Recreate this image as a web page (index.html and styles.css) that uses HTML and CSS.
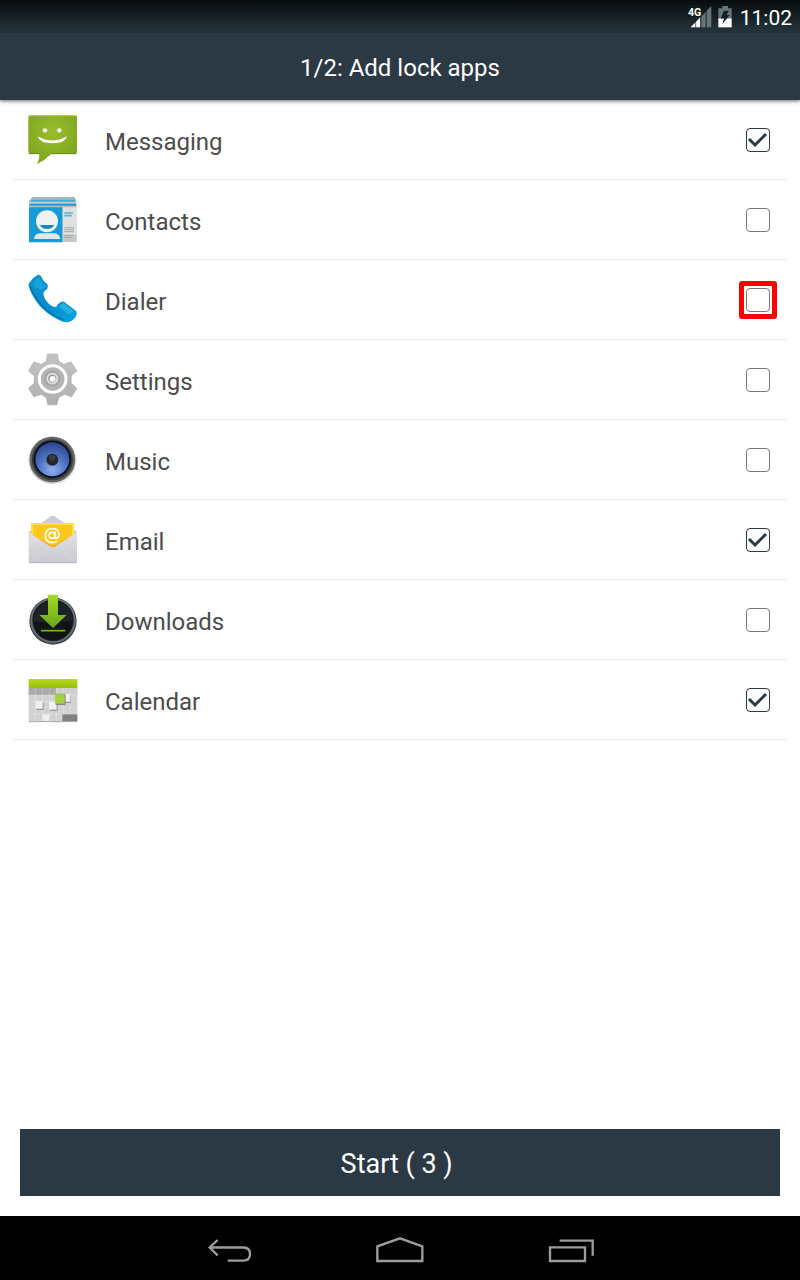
FILE: index.html
```html
<!DOCTYPE html>
<html lang="en">
<head>
<meta charset="utf-8">
<meta name="viewport" content="width=device-width, initial-scale=1">
<title>Add lock apps</title>
<link rel="stylesheet" href="styles.css">
</head>
<body>
<div class="screen">
  <div class="status-bar">
    <svg class="signal" viewBox="51 12 72 72" aria-label="4G signal" role="img">
      <path d="M121 15V79H60Z" fill="#66757a"/>
      <path d="M88 49V79H59Z" fill="#fff"/>
      <path d="M89.500 15V80M105.500 15V80" stroke="#15252b" stroke-width="3"/>
      <path d="M74 60V80" stroke="#15252b" stroke-width="2"/>
      <path d="M51 12H91V47H51Z" fill="#0e1a1e"/>
      <text class="network" x="51" y="45">4G</text>
    </svg>
    <svg class="battery" viewBox="141 12 42 72" aria-label="Battery charging" role="img">
      <path d="M154 15H171V22H182V52H142V22H154Z" fill="#66757a"/>
      <path d="M142 52H182V79H142Z" fill="#fff"/>
      <path d="M158 30L174 29L166 42L176 42L154 70L159 52L149 53Z" fill="#122127"/>
    </svg>
    <time class="clock">11:02</time>
  </div>
  <header class="title-bar"><h1 class="title">1/2: Add lock apps</h1></header>

  <main class="content">
    <ul class="apps">
      <li><label class="app">
        <svg class="app-icon" viewBox="45 39 162 162" aria-hidden="true">
          <defs><radialGradient id="msg" cx=".5" cy=".35" r=".75"><stop offset="0" stop-color="#9abd2e"/><stop offset="1" stop-color="#78a31c"/></radialGradient></defs>
          <path d="M62 46H194Q201 46 201 53V155Q201 162 194 162H124Q105 181 80 193Q90 178 87 162H62Q55 162 55 155V53Q55 46 62 46Z" fill="url(#msg)"/>
          <path d="M58 47H198" stroke="#b3cf3f" stroke-width="4" stroke-linecap="round"/>
          <path d="M57 161H87M124 161H199" stroke="#668b18" stroke-width="3"/>
          <circle cx="105" cy="91" r="6.500" fill="#fff"/><circle cx="148" cy="91" r="6.500" fill="#fff"/>
          <path d="M83 109Q127 134 171 109Q166 130 127 130Q89 130 83 109Z" fill="#fff"/>
        </svg>
        <span class="app-name">Messaging</span>
        <span class="tick"><input class="box" type="checkbox" checked><svg class="mark" viewBox="0 0 24 24" aria-hidden="true"><path d="M3 11L9 17L20 6"/></svg></span>
      </label></li>
      <li><label class="app">
        <svg class="app-icon" viewBox="30 27 162 162" aria-hidden="true">
          <path d="M52 39H178L184 49V174H43V49Z" fill="#bfc3c5"/>
          <path d="M52 39H178L181 47H48Z" fill="#a9b4b9"/>
          <path d="M48 47H181V55H46Z" fill="#36afe0"/>
          <path d="M45 53H183V59H44Z" fill="#c9c9c9"/>
          <path d="M43 59H184V65H43Z" fill="#1599d2"/>
          <path d="M43 65H184V70H43Z" fill="#b7babb"/>
          <path d="M143 70H185V174H143Z" fill="#dfe0e0"/>
          <path d="M143 154H185V174H143Z" fill="#c6c8c9"/>
          <path d="M42 70H142V175H42Z" fill="#169bd5"/>
          <path d="M57 165Q58 150 76 148H118Q134 150 136 165Z" fill="#e5e7e7"/>
          <circle cx="96" cy="112" r="33" fill="#f0f2f2"/>
          <path d="M75 123H118Q111 135 96 135T75 123Z" fill="#1388ba"/>
          <path d="M148 87H174M148 95H170" stroke="#57b3d8" stroke-width="5"/>
          <path d="M148 131H177M148 137H177M148 143H177M148 154H177M148 160H170" stroke="#999c9e" stroke-width="2.500"/>
        </svg>
        <span class="app-name">Contacts</span>
        <span class="tick"><input class="box" type="checkbox"><svg class="mark" viewBox="0 0 24 24" aria-hidden="true"><path d="M3 11L9 17L20 6"/></svg></span>
      </label></li>
      <li><label class="app">
        <svg class="app-icon" viewBox="30 27 162 162" aria-hidden="true">
          <defs><linearGradient id="tel" x1="0" y1="0" x2="1" y2="1"><stop offset="0" stop-color="#0795d2"/><stop offset=".5" stop-color="#0a8ccd"/><stop offset="1" stop-color="#07a4dd"/></linearGradient></defs>
          <path d="M41 60Q53 39 70 32Q76 31 79 38Q84 52 97 61Q100 66 97 74L86 84Q83 100 99 117Q113 131 124 129Q127 119 140 113Q146 112 151 116L181 139Q187 144 185 151Q181 168 161 174Q148 177 130 167Q96 151 72 123Q48 93 41 66Z" fill="url(#tel)"/>
          <path d="M52 62Q61 46 73 39L80 55L93 66L83 77Q69 75 52 62Z" fill="#17a2da"/>
          <path d="M132 130Q137 119 146 117L177 141L163 151Z" fill="#26b1de"/>
          <path d="M46 68Q55 92 79 123Q106 151 145 167" fill="none" stroke="#0672ae" stroke-width="4" stroke-linecap="round"/>
        </svg>
        <span class="app-name">Dialer</span>
        <span class="tick highlighted"><input class="box" type="checkbox"><svg class="mark" viewBox="0 0 24 24" aria-hidden="true"><path d="M3 11L9 17L20 6"/></svg></span>
      </label></li>
      <li><label class="app">
        <svg class="app-icon" viewBox="30 27 162 162" aria-hidden="true">
          <defs><linearGradient id="gear" x2="0" y2="1"><stop stop-color="#c3c3c3"/><stop offset="1" stop-color="#b0b0b0"/></linearGradient></defs>
          <path d="M97 32H127L131 54L146 63L168 55L186 82L169 96V119L186 134L170 160L149 152L131 162L126 184H98L94 162L78 152L56 160L40 134L57 119V96L40 82L56 55L78 63L94 54Z" fill="#888" opacity=".6"/>
          <path d="M97 30H127L131 52L146 61L168 53L185 80L168 94V117L185 132L169 157L149 149L131 159L126 181H98L94 159L78 149L57 157L41 132L58 117V94L41 80L57 53L78 61L94 52Z" fill="url(#gear)" stroke="#b5b5b5" stroke-width="2" stroke-linejoin="round"/>
          <circle cx="113" cy="105" r="40" fill="#b4b4b4" stroke="#fff" stroke-width="9"/>
          <circle cx="112" cy="104" r="24" fill="#a6a6a6"/>
          <circle cx="112" cy="104" r="15" fill="#999" stroke="#e5e5e5" stroke-width="5"/>
          <circle cx="113" cy="105" r="9" fill="#fff"/>
        </svg>
        <span class="app-name">Settings</span>
        <span class="tick"><input class="box" type="checkbox"><svg class="mark" viewBox="0 0 24 24" aria-hidden="true"><path d="M3 11L9 17L20 6"/></svg></span>
      </label></li>
      <li><label class="app">
        <svg class="app-icon" viewBox="30 27 162 162" aria-hidden="true">
          <defs><radialGradient id="cone" cx=".5" cy=".8" r=".8"><stop stop-color="#91b1ed"/><stop offset=".5" stop-color="#4f74c3"/><stop offset="1" stop-color="#2b458e"/></radialGradient></defs>
          <circle cx="112" cy="109" r="72" fill="#777" opacity=".25"/>
          <circle cx="112" cy="107" r="65" fill="#393b3c" stroke="#626465" stroke-width="7"/>
          <circle cx="112" cy="106" r="56" fill="#070b1b"/>
          <circle cx="112" cy="106" r="51" fill="url(#cone)"/>
          <circle cx="112" cy="107" r="18" fill="#26282b"/>
          <circle cx="112" cy="101" r="9" fill="#3b3d40"/>
        </svg>
        <span class="app-name">Music</span>
        <span class="tick"><input class="box" type="checkbox"><svg class="mark" viewBox="0 0 24 24" aria-hidden="true"><path d="M3 11L9 17L20 6"/></svg></span>
      </label></li>
      <li><label class="app">
        <svg class="app-icon" viewBox="30 27 162 162" aria-hidden="true">
          <defs><linearGradient id="env" x2="0" y2="1"><stop stop-color="#e3e1e7"/><stop offset="1" stop-color="#c9c8d0"/></linearGradient></defs>
          <path d="M41 84L108 36Q113 33 118 36L186 84V100H41Z" fill="#cfcdd2"/>
          <path d="M49 57H177V104L113 145L49 104Z" fill="#ffc61b"/>
          <path d="M52 60H174V104L113 140L52 104Z" fill="none" stroke="#ffe13b" stroke-width="6"/>
          <path d="M60 98L113 125L166 98L113 144Z" fill="#f9b01c"/>
          <path d="M41 85L107 128Q113 132 119 128L186 85V174Q186 177 182 177H45Q41 177 41 174Z" fill="url(#env)"/>
          <path d="M42 176L82 145M185 176L145 145" stroke="#d9d7df" stroke-width="2"/>
          <path d="M42 176H185" stroke="#b6b5bb" stroke-width="3"/>
          <circle cx="111" cy="94" r="9" fill="none" stroke="#fff" stroke-width="5"/>
          <path d="M121 84L119 97Q119 105 125 103Q133 99 132 89Q130 74 112 74Q93 74 91 94Q90 115 111 116Q119 116 125 112" fill="none" stroke="#fff" stroke-width="5" stroke-linecap="round"/>
        </svg>
        <span class="app-name">Email</span>
        <span class="tick"><input class="box" type="checkbox" checked><svg class="mark" viewBox="0 0 24 24" aria-hidden="true"><path d="M3 11L9 17L20 6"/></svg></span>
      </label></li>
      <li><label class="app">
        <svg class="app-icon" viewBox="30 27 162 162" aria-hidden="true">
          <defs><linearGradient id="arrow" x2="0" y2="1"><stop stop-color="#a4db29"/><stop offset="1" stop-color="#68a516"/></linearGradient></defs>
          <circle cx="114" cy="111" r="71" fill="#41484b"/>
          <circle cx="114" cy="109" r="65" fill="#171b1d" stroke="#656d70" stroke-width="6"/>
          <circle cx="114" cy="109" r="58" fill="#1c2225"/>
          <path d="M57 112Q78 119 114 115T171 112Q166 166 114 167T57 112Z" fill="#101415"/>
          <path d="M99 32H129V93H155L114 132L73 93H99Z" fill="url(#arrow)"/>
          <path d="M78 140H151" stroke="#7ab51e" stroke-width="5"/>
        </svg>
        <span class="app-name">Downloads</span>
        <span class="tick"><input class="box" type="checkbox"><svg class="mark" viewBox="0 0 24 24" aria-hidden="true"><path d="M3 11L9 17L20 6"/></svg></span>
      </label></li>
      <li><label class="app">
        <svg class="app-icon" viewBox="30 27 162 162" aria-hidden="true">
          <defs><linearGradient id="day" x2="0" y2="1"><stop stop-color="#b5da1c"/><stop offset="1" stop-color="#98bd0c"/></linearGradient></defs>
          <path d="M41 71H187V174H41Z" fill="#d2d2d2"/>
          <path d="M41 72H124V93H41Z" fill="#aaa"/>
          <path d="M124 72H187V93H124Z" fill="#cfcfcf"/>
          <path d="M61 72V173M82 72V173M103 72V173M124 72V173M145 72V173M166 72V173M42 93H186M42 112H186M42 131H186M42 151H186" stroke="#fff" stroke-opacity=".35" stroke-width="2"/>
          <path d="M142 151H187V172H142Z" fill="#808080"/>
          <path d="M42 173H186" stroke="#aaa" stroke-width="3"/>
          <path d="M64 115H86V138H64ZM104 118H128V141H104ZM150 94H168V117H150Z" fill="#999"/>
          <path d="M62 111H83V134H62ZM102 113H125V137H102ZM147 90H166V113H147ZM83 151H102V170H83Z" fill="#f0f0f0"/>
          <path d="M122 91H152V123H122Z" fill="#888"/>
          <path d="M120 88H149V119H120Z" fill="#a3cf42"/>
          <path d="M41 45H187V72H41Z" fill="url(#day)"/>
        </svg>
        <span class="app-name">Calendar</span>
        <span class="tick"><input class="box" type="checkbox" checked><svg class="mark" viewBox="0 0 24 24" aria-hidden="true"><path d="M3 11L9 17L20 6"/></svg></span>
      </label></li>
    </ul>
    <button class="start" type="button">Start ( 3 )&nbsp;</button>
  </main>

  <nav class="nav-bar" aria-label="System navigation">
    <button class="nav-button" type="button" aria-label="Back"><svg class="nav-icon" viewBox="46 336 144 96"><path d="M61 379.500H162Q181 380 181 399T162 419H114M84 357L60 379.500L84 403"/></svg></button>
    <button class="nav-button" type="button" aria-label="Home"><svg class="nav-icon" viewBox="558 336 144 96"><path d="M562 420V376L630 352L697 376V420Z"/></svg></button>
    <button class="nav-button" type="button" aria-label="Recent apps"><svg class="nav-icon" viewBox="1071 336 144 96"><path d="M1080 379H1185V420H1080ZM1109 359H1208V404"/></svg></button>
  </nav>
</div>
</body>
</html>
```
FILE: styles.css
```css
* { box-sizing: border-box; }

body {
  margin: 0;
  background: #fff;
  color: #4c4c4c;
  font-family: Roboto, "Noto Sans", sans-serif;
}

.screen {
  display: flex;
  flex-direction: column;
  min-height: 100vh;
}

.status-bar {
  display: flex;
  align-items: center;
  justify-content: flex-end;
  gap: 6px;
  height: 33px;
  padding: 0 8px;
  background: linear-gradient(#070b0c, #26373f);
}

.signal { width: 24px; height: 24px; }
.battery { width: 14px; height: 24px; }
.network { fill: #fff; font-size: 32px; font-weight: 700; }

.clock {
  padding: 2px 0 0 2px;
  color: #fff;
  font-size: 21px;
  line-height: 32px;
}

.title-bar {
  display: flex;
  align-items: center;
  justify-content: center;
  height: 67px;
  padding-top: 2px;
  background: #2b3944;
  box-shadow: 0 1px 4px #00000099;
}

.title {
  margin: 0;
  color: #fff;
  font-size: 24px;
  font-weight: 400;
  line-height: 32px;
}

.content {
  display: flex;
  flex: 1;
  flex-direction: column;
  justify-content: space-between;
}

.apps {
  margin: 0;
  padding: 0 13px;
  list-style: none;
}

.app {
  display: flex;
  align-items: center;
  height: 80px;
  padding: 0 10px 0 12px;
  border-bottom: 1px solid #e9e9e9;
}

.app-icon {
  width: 54px;
  height: 54px;
  flex: none;
}

.app-name {
  flex: 1;
  padding: 4px 0 0 26px;
  font-size: 24px;
  line-height: 32px;
}

.tick {
  display: grid;
  place-items: center;
  width: 38px;
  height: 38px;
  border: 5px solid transparent;
  border-radius: 3px;
}

.highlighted { border-color: #f00; }

.box,
.mark {
  grid-area: 1 / 1;
  width: 24px;
  height: 24px;
  margin: 0;
}

.box {
  appearance: none;
  border: 1px solid #777;
  border-radius: 4px;
}

.box:checked { border-color: #2b3944; }

.mark {
  visibility: hidden;
  fill: none;
  stroke: #2b3944;
  stroke-width: 3;
  pointer-events: none;
}

.box:checked + .mark { visibility: visible; }

.start {
  height: 67px;
  margin: 20px;
  padding: 2px 0 0;
  border: 0;
  background: #2b3944;
  color: #fff;
  font-family: inherit;
  font-size: 27px;
}

.nav-bar {
  display: flex;
  justify-content: center;
  gap: 27px;
  height: 64px;
  background: #000;
}

.nav-button {
  display: grid;
  place-items: center;
  width: 144px;
  padding: 2px 0 0;
  border: 0;
  background: none;
}

.nav-icon {
  width: 48px;
  height: 32px;
  fill: none;
  stroke: #9c9c9c;
  stroke-width: 7;
}
```
